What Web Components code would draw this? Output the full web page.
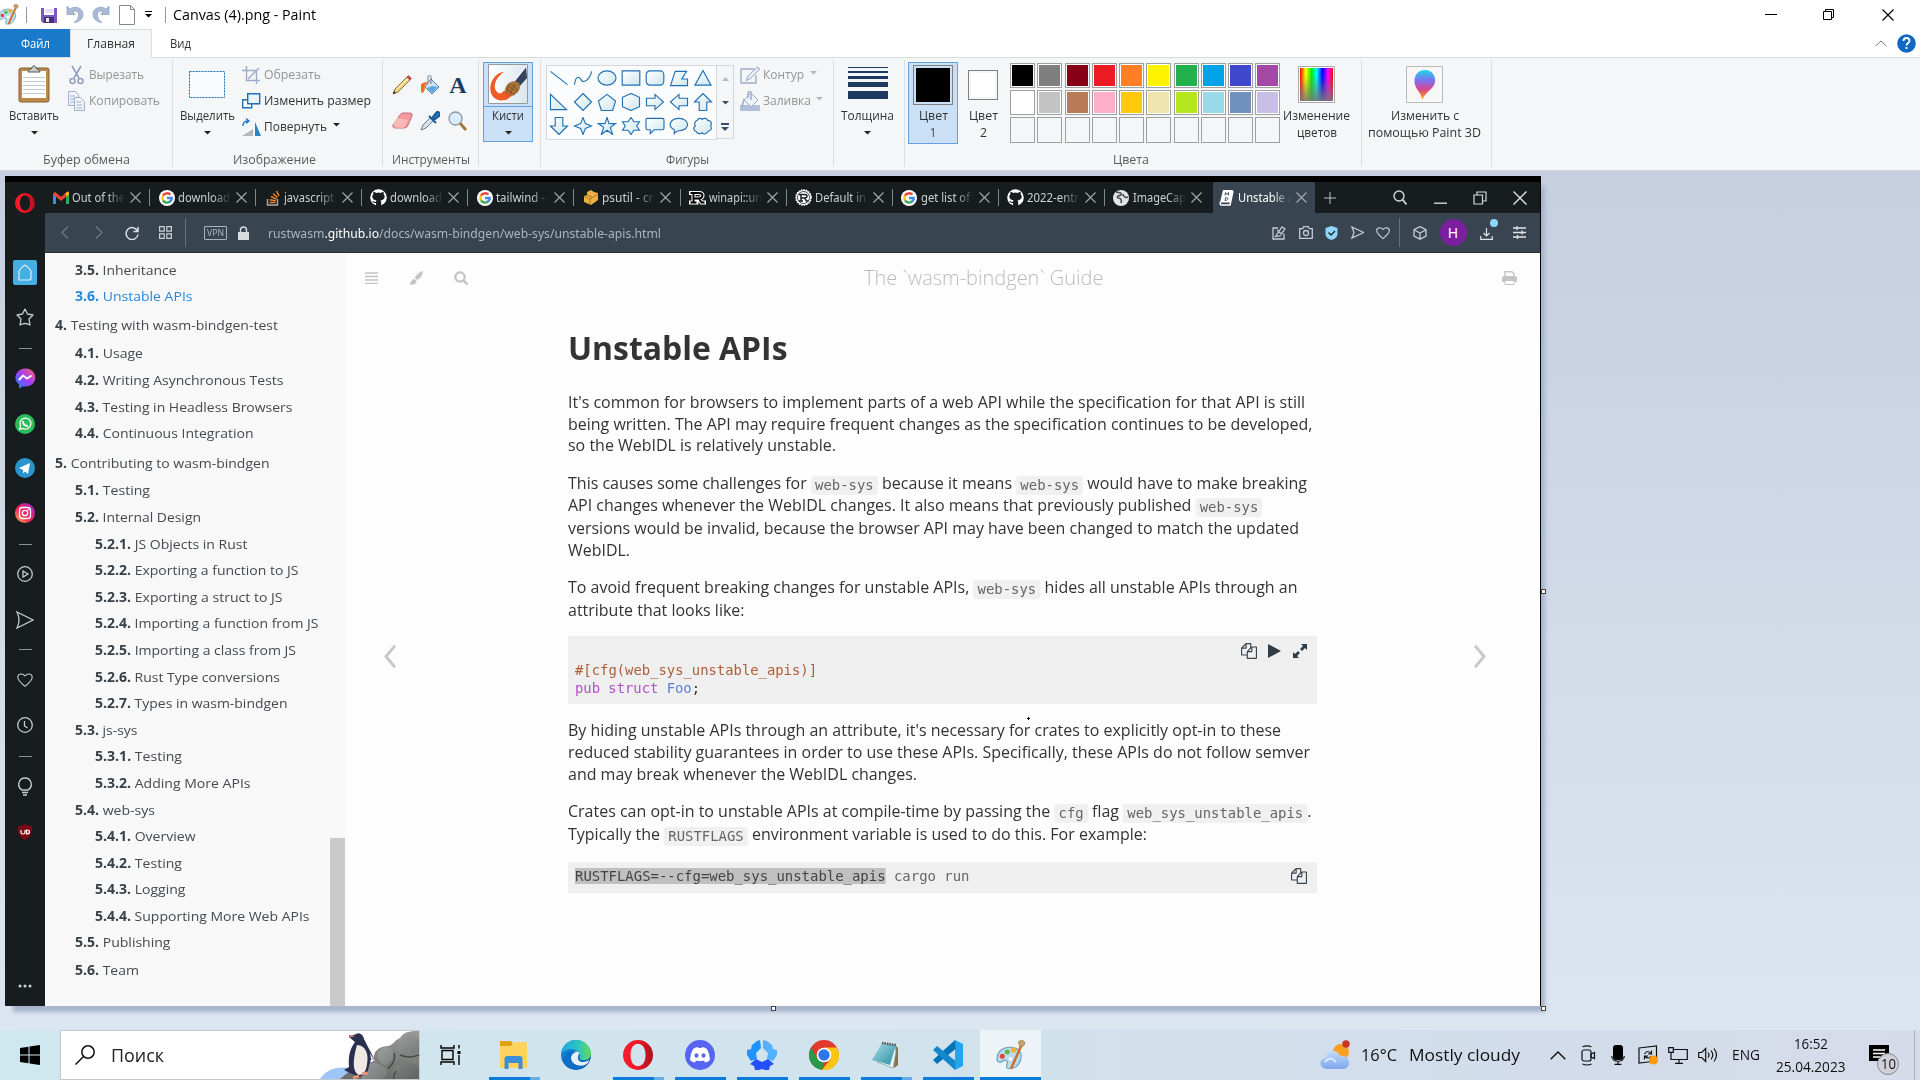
<!DOCTYPE html>
<html lang="ru"><head><meta charset="utf-8"><title>Canvas (4).png - Paint</title>
<style>html,body{margin:0;background:#fff;overflow:hidden}body{width:1924px;height:1080px}</style></head>
<body><paint-app></paint-app>
<script>
const S=(w,h,b,vb,x='')=>`<svg width="${w}" height="${h}" viewBox="${vb||`0 0 ${w} ${h}`}" fill="none" ${x}>${b}</svg>`;
const F=(w,t,s='',c='')=>`<fit-text w="${w}" class="${c}" style="${s}">${t}</fit-text>`;
// Stack items in a column: [top, height, html, extra style]
const V=(y,items)=>items.map(([t,h,b,st=''])=>{const o=`<div class="v" style="margin-top:${(t-y).toFixed(2)}px;height:${h}px;${st}">${b}</div>`;y=t+h;return o}).join('');
// Line items up in a row: [left, width, html, extra style]
const H=(x,items)=>items.map(([l,w,b,st=''])=>{const o=`<div class="h" style="margin-left:${(l-x).toFixed(2)}px;width:${w}px;${st}">${b}</div>`;x=l+w;return o}).join('');
const BASE=`*{box-sizing:border-box}svg{display:block;flex:none}.v,.h{flex:none;display:flex;align-items:center;justify-content:center}`;
const def=(name,css,html)=>customElements.define(name,class extends HTMLElement{constructor(){super();this.attachShadow({mode:'open'}).innerHTML=`<style>${BASE}${css}</style>${html}`}});

const palette=(n)=>S(n,n,`<path d="M3 9C8 4 18 5 20 11c1 7-4 12-9 12-3 0-3-2-2-4s-2-4-4-2-5 0-4-3c0-2 1-4 2-5z" fill="#b9dcee" stroke="#6b9dc0" stroke-width=".9"/><circle cx="5" cy="13" r="2" fill="#e0463a"/><circle cx="9" cy="9.500" r="2" fill="#5cb84a"/><circle cx="14" cy="8" r="2.200" fill="#f3b32c"/><circle cx="11.500" cy="15" r="1.500" fill="#fff"/><path d="M20 5 12 23" stroke="#cf6f21" stroke-width="2"/><path d="M18 1.500c2-2 5-1 5 1 0 2-2 3-4 3z" fill="#c9a26c" stroke="#9b7340" stroke-width=".6"/>`,'0 0 24 24');
const arr=(c='#222')=>S(7,4,`<path d="M0 0h7L3.500 3.500z" fill="${c}"/>`);

/* ---------- title bar ---------- */
def('paint-titlebar',`:host{display:flex;height:29px;align-items:center;background:#fff;font:13.6px "Open Sans",sans-serif;color:#000}`,
H(0,[[-2,21,palette(21)],[26,1,'<i style="width:1px;height:16px;background:#999"></i>'],
[41,16,S(16,16,`<path d="M0 1h16v15H2l-2-2z" fill="#7d57c1"/><path d="M3 1h10v7H3z" fill="#fff"/><path d="M4 3h8M4 5h8" stroke="#c7c2d8"/><path d="M3 10h10v6H3z" fill="#483078"/><path d="M5 11h3v4H5z" fill="#e8e4f2"/>`)],
[66,18,S(18,19,`<path d="M1 1v8.500h8.500L6.800 6.800C10 5 12.500 6.500 12.500 10c0 3.500-2 6-4.500 7.500 6-.5 9-4 9-8.500C17 3 9 0 4 4z" fill="#a9b9d6" stroke="#8ca0c2" stroke-width=".7"/>`)],
[92,18,S(18,19,`<path d="M17 1v8.500H8.500l2.700-2.700C8 5 5.500 6.500 5.500 10c0 3.500 2 6 4.500 7.500-6-.5-9-4-9-8.500C1 3 9 0 14 4z" fill="#a9b9d6" stroke="#8ca0c2" stroke-width=".7"/>`)],
[119,16,S(16,20,`<path d="M.5.500h11l4 4v15H.5z" fill="#fff" stroke="#888"/><path d="M11.500.500v4h4" stroke="#888"/>`)],
[145,7,S(7,7,`<path d="M0 .500h7" stroke="#000"/><path d="M0 3h7L3.500 6.500z" fill="#000"/>`)],
[165,1,'<i style="width:1px;height:16px;background:#999"></i>'],[173,143,F(143,'Canvas (4).png - Paint')],
[1765,12,S(12,12,`<path d="M0 5.500h12" stroke="#000"/>`)],[1822,13,S(13,13,`<path d="M1.500 3.500h8v8h-8zM3.500 3V1.500h8v8H10" stroke="#000"/>`)],
[1882,12,S(12,12,`<path d="m.5.500 11 11m0-11-11 11" stroke="#000" stroke-width="1.200"/>`)]]));

def('paint-tabs',`:host{display:flex;height:29px;background:#fff;border-bottom:1px solid #dadbdc;font:12.2px/29px "Open Sans",sans-serif;color:#333}
.file{width:70px;background:#1979ca;color:#fff}.on{width:82px;height:29px;margin-left:0;background:#f5f6f7;border:1px solid #dadbdc;border-bottom:0;line-height:27px}
div{display:flex;justify-content:center;height:28px}.view{width:56px}.end{flex:1;justify-content:flex-start;align-items:center}`,
`<div class="file">${F(29,'Файл')}</div><div class="on">${F(48,'Главная')}</div><div class="view">${F(21,'Вид')}</div><div class="end">${H(208,[[1875,12,S(12,7,'<path d="m.5 6 5.500-5 5.500 5" stroke="#777"/>')],[1897,19,S(19,19,'<circle cx="9.500" cy="9.500" r="9.300" fill="#1167c4"/><path d="M6.500 7c0-4 6-4 6 0 0 2-3 2-3 4.500M9.500 13v2" stroke="#fff" stroke-width="1.800"/>')]])}</div>`);

/* ---------- ribbon ---------- */
def('ribbon-group',`:host{display:flex;flex-direction:column;flex:none;height:107px;margin-top:2px;border-right:1px solid #dcdedf;width:var(--w)}
.body{height:92px;display:flex;align-items:flex-start}footer{height:15px;display:flex;justify-content:center;line-height:15px;color:#5a5a5a;padding-right:var(--sh,0px)}`,
`<div class="body"><slot></slot></div><footer><slot name="label"></slot></footer>`);
const grp=(w,lw,label,body,sh='0px')=>`<ribbon-group style="--w:${w}px;--sh:${sh}">${body}${label?`<span slot="label">${F(lw,label)}</span>`:''}</ribbon-group>`;
const col=(x,w,items,cls='')=>`<div class="col ${cls}" style="margin-left:${x}px;width:${w}px">${V(60,items)}</div>`;
const lrow=(x,w,items)=>`<div class="col" style="margin-left:${x}px;width:${w}px">${V(60,items.map(([t,b])=>[t,20,b,'justify-content:flex-start']))}</div>`;
const clip=S(32,38,`<rect x="1" y="3" width="30" height="34" rx="2" fill="#b98a4b" stroke="#85602f"/><path d="M4 6h24v27H4z" fill="#fff"/><path d="M5 12.500h22M5 16.500h22M5 20.500h22M5 24.500h22M5 28.500h22" stroke="#bdcbd8"/><path d="M10 7c0-3 3-2 4-4 1-3 3-3 4 0 1 2 4 1 4 4z" fill="#c9cbcd" stroke="#555"/>`);
const st='stroke="#1f6fb5" stroke-width="1.200"';
const shp=['<path d="M1 2l18 14" '+st+'/>','<path d="M1 16c1-8 4-10 7-5s10-2 11-9" '+st+'/>','<ellipse cx="10" cy="9" rx="9.500" ry="7.500"/>','<path d="M.7 1.500h18.600v15H.7z"/>','<rect x=".7" y="1.500" width="18.600" height="15" rx="4"/>','<path d="M6 2h12l-5 8h6v7H1z"/>','<path d="M10 1 18.500 16.500h-17z"/>',
'<path d="M1 1v16h17z"/>','<path d="m10 0 9 9-9 9-9-9z"/>','<path d="m10 1 9 7-3 10H4L1 8z"/>','<path d="m10 0 9 4v10l-9 4-9-4V4z"/>','<path d="M1 5h9V1l9 8-9 8v-4H1z"/>','<path d="M19 5h-9V1L1 9l9 8v-4h9z"/>','<path d="M6 18v-9H1l9-9 9 9h-5v9z"/>',
'<path d="M6 0v9H1l9 9 9-9h-5V0z"/>','<path d="m10 0 2.500 6.500L19 9l-6.500 2.500L10 18l-2.500-6.500L1 9l6.500-2.500z"/>','<path d="m10 0 2.200 6.500H19l-5.500 4L16 18l-6-4.500L4 18l2.500-7.500L1 6.500h6.800z"/>','<path d="m10 0 3 4.500h6L16 9l3 4.500h-6L10 18l-3-4.500H1L4 9 1 4.500h6z"/>','<path d="M2 1h16q1.500 0 1.500 2v8q0 2-1.500 2H9l-4 4v-4H2Q.5 13 .5 11V3Q.5 1 2 1z"/>','<path d="M10 1c12 0 12 13 0 13-2 0-3 0-5 3v-4C-3 9 1 1 10 1z"/>','<path d="M4 3c1-3 4-2 5-1 2-2 5-1 6 1 3 0 5 3 3 6 2 3 0 5-3 6-1 3-5 3-6 1-2 2-5 1-6-1-3-1-4-4-1-6-2-3 0-5 2-6z"/>'];
const cols=['#000','#7f7f7f','#880015','#ed1c24','#ff7f27','#fff200','#22b14c','#00a2e8','#3f48cc','#a349a4','#fff','#c3c3c3','#b97a57','#ffaec9','#ffc90e','#efe4b0','#b5e61d','#99d9ea','#7092be','#c8bfe7'];
const tools=[
S(20,20,'<path d="m1 19 2-5L15 2l3 3L6 17z" fill="#f3d27c" stroke="#6d5628" stroke-width=".8"/><path d="m15 2 1.500-1.500 3 3L18 5z" fill="#d84a56" stroke="#84434a" stroke-width=".7"/><path d="m5 14 11-10" stroke="#fff6d6"/><path d="m1 19 1-3 2 2z" fill="#333"/>'),
S(20,20,'<path d="m11 4 8 8-7 7-7-7z" fill="#cfe3f5" stroke="#5580ab"/><path d="m12 11 6 1-6 6-5-5z" fill="#5aa6e0"/><path d="M11 9V2c0-2-3-2-3 0v5" stroke="#6c7f92"/><path d="M1 17V10c0-2 4-3 8-3-3 2-5 3-4 7l-2 4z" fill="#f16a23"/>'),
'<b class="A">A</b>',
S(21,20,'<path d="M8 4q1-2 3-2h7q3 0 2 3l-4 9q-1 3-4 3H4q-4 0-3-3z" fill="#f29a9d" stroke="#c66e72"/><path d="m2 12 3-5 11 2-4 8-9-.5q-2-1-1-4.500z" fill="#f9b8b7"/>'),
S(20,20,'<path d="m1 19 2-5 8-8 3 3-8 8z" fill="#d6e3ec" stroke="#6a7d8e"/><path d="m9 5 7 7M12 7l4-5c2-3 5 1 3 3l-5 4z" stroke="#185b94" fill="#2379ba" stroke-width="2"/>'),
S(20,20,'<path d="m11 11 7 8" stroke="#a4793e" stroke-width="3"/><circle cx="7.500" cy="7.500" r="6.500" fill="#dcecfa" stroke="#8b97a4" stroke-width="1.300"/>')];
def('paint-ribbon',`:host{display:flex;height:113px;background:#f5f6f7;border-bottom:1px solid #d5d7da;font:12.2px/16px "Open Sans",sans-serif;color:#333}
.col{display:flex;flex-direction:column;flex:none}.g{color:#949494}
.sel{height:80px;margin-top:2px;background:#c9e0f7;border:1px solid #62a2e4}
.tools{display:grid;grid-template:36px 36px/28px 28px 28px;margin:7px 0 0 5px;place-items:center}
.A{font:bold 24px/24px "Liberation Serif",serif;color:#1e3c66}
.gal{display:grid;grid-template-columns:repeat(7,24px);grid-auto-rows:24px;place-items:center;width:171px;height:75px;margin:5px 0 0 5px;border:1px solid #d5d7db;background:#fbfcfd}
.scr{width:18px;height:74px;margin:5px 0 0 -1px;border:1px solid #d5d7db;display:grid;grid-template-rows:25px 24px 24px;place-items:center}
.pal{display:grid;grid-template:25px 25px 26px/repeat(10,25px);gap:2px 2.250px;margin:3px 0 0 12px}.pal i{border:1px solid #a0a0a0;padding:1px;background:content-box var(--c,transparent);box-shadow:inset 0 0 0 1px var(--in,transparent)}
.sw{border:1px solid #808080;background:content-box var(--c) ;padding:2px}`,
grp(173,87,'Буфер обмена',col(9,50,[[65,38,clip],[108,16,F(50,'Вставить')],[131,4,arr()]])+
`<div class="col g" style="margin-left:9px">${V(60,[[65,20,S(17,20,'<path d="M4 1 11 13M13 1 6 13" stroke="#8fa0bd" stroke-width="1.600"/><circle cx="4.500" cy="16" r="2.500" stroke="#8fa0bd" stroke-width="1.500"/><circle cx="12.500" cy="16" r="2.500" stroke="#8fa0bd" stroke-width="1.500"/>')+'<span style="width:4px"></span>'+F(55,'Вырезать'),'justify-content:flex-start'],[91,20,S(17,20,'<g stroke="#a3b2cc" fill="#eff3f9"><path d="M.5.500h7l3 3v11H.500z"/><path d="M6.500 6.500h6l4 4v9h-10z"/><path d="M2 5h5M2 8h5M2 11h4M8.500 11h5M8.500 14h6M8.500 17h6"/></g>')+'<span style="width:4px"></span>'+F(71,'Копировать'),'justify-content:flex-start']])}</div>`,'0px')+
grp(210,83,'Изображение',col(6,56,[[70,28,S(36,27,'<rect x=".5" y=".5" width="35" height="26" fill="#f8fbfe" stroke="#1f6fb5" stroke-dasharray="2 1"/>')],[108,16,F(55,'Выделить')],[131,4,arr()]])+
lrow(7,135,[[65,S(19,19,'<path d="M0 4.500h14.500V18M4.500 0v14.500H18M6 13 17 2" stroke="#9badc9" stroke-width="1.400"/>')+'<span style="width:3px"></span><span class="g">'+F(57,'Обрезать')+'</span>'],[91,S(19,18,'<path d="M.7 7.700h9v8h-9z" fill="#fff" stroke="#1f6fb5" stroke-width="1.400"/><path d="M5.700 1.700h12v10h-12z" fill="#e8f4fb" stroke="#1f6fb5" stroke-width="1.400"/>')+'<span style="width:3px"></span>'+F(107,'Изменить размер')],[117,S(19,19,'<path d="M0 18 11 11v7z" fill="#b8b8b8"/><path d="m13 4 6 14h-6z" fill="#2a83c4"/><path d="M1 8c0-4 2-5 5-5M4 .500 7 3 4 5.500" stroke="#1f78c8" stroke-width="1.400"/>')+'<span style="width:3px"></span>'+F(63,'Повернуть')+'<span style="margin:-4px 0 0 6px">'+arr()+'</span>']]),'6px')+
grp(96,78,'Инструменты',`<div class="tools">${tools.join('')}</div>`)+
grp(62,0,'',`<div class="col sel" style="margin-left:4px;width:50px">${V(63,[[64,40,S(40,40,'<defs><linearGradient id="b" x2="1"><stop stop-color="#fff"/><stop offset="1" stop-color="#d9e8ee"/></linearGradient></defs><path d="M.5.500h39v39H.5z" fill="url(#b)" stroke="#999"/><path d="M16 8C3 9-3 29 8 35c5 3 11 1 14-3l-6-5c-3 3-5 3-7 1C4 23 8 13 16 8z" fill="#ef5b25"/><path d="M26 18 38 3l1 11-8 9z" fill="#34425f"/><path d="m26 17 12-15" stroke="#eef" stroke-width="2"/><path d="M17 25c2-7 9-10 14-6 3 5-1 12-10 14z" fill="#a9733a"/><path d="M9 34c4-1 5-6 8-8l6 6c-4 5-9 5-14 2z" fill="#f05a28"/><path d="m20 22 9 6m-6-8 7 6m-12-1 9 6m-6-11-3 11m9-11-6 12" stroke="#75481f" stroke-width=".7"/>')],[106,1,'','background:#62a2e4'],[108,16,F(32,'Кисти')],[131,4,arr()]])}</div>`)+
grp(293,43,'Фигуры',`<div class="gal">${shp.map((p,i)=>S(20,18,i<2?p:`<defs><linearGradient id="q${i}" x2="1" y2="1"><stop stop-color="#fff"/><stop offset="1" stop-color="#cde6ee"/></linearGradient></defs><g fill="url(#q${i})" ${st}>${p}</g>`,'-.5 -.5 21 19')).join('')}</div><div class="scr">${S(7,4,'<path d="M0 4h7L3.500 0z" fill="#b4bccb"/>')}${arr('#34506f')}${S(8,8,'<path d="M0 1h8" stroke="#34506f" stroke-width="2"/><path d="M0 4h8L4 8z" fill="#34506f"/>')}</div>`+
`<div class="col g" style="margin-left:6px">${V(60,[[65,20,S(20,18,'<path d="M16 9v8H1V3h13" stroke="#9badc9" stroke-width="1.400"/><path d="m6 15 2-5L17 1l3 2-9 9z" fill="#e4eaf3" stroke="#9badc9"/>')+'<span style="width:3px"></span>'+F(41,'Контур')+'<span style="margin:-4px 0 0 6px">'+arr('#b3b9c1')+'</span>','justify-content:flex-start'],[91,20,S(20,20,'<path d="M0 14h20v6H0z" fill="#b2c0d8"/><path d="m11 2 7 7-7 7-7-7z" fill="#edf2fa" stroke="#9badc9"/><path d="M11 9V2c0-3-3-2-3 1v4M4 8l-2 8" stroke="#9badc9" stroke-width="1.500"/>')+'<span style="width:3px"></span>'+F(48,'Заливка')+'<span style="margin:-4px 0 0 5px">'+arr('#b3b9c1')+'</span>','justify-content:flex-start']])}</div>`,'0px')+
grp(71,0,'',col(7,53,[[67,32,S(40,32,'<path d="M0 0h40v1H0zM0 4h40v2H0zM0 9h40v3H0zM0 15h40v5H0zM0 24h40v8H0z" fill="#1f3a61"/>')],[108,16,F(53,'Толщина')],[131,4,arr()]]))+
grp(457,36,'Цвета',`<div class="col sel" style="margin-left:3px;width:50px;height:82px">${V(63,[[65,40,'<span class="sw" style="width:40px;height:40px;--c:#000"></span>'],[108,16,F(29,'Цвет')],[125,16,F(6,'1')]])}</div>`+col(10,30,[[70,30,'<span class="sw" style="width:30px;height:30px;--c:#fff"></span>'],[108,16,F(29,'Цвет')],[125,16,F(7,'2')]])+
`<div class="pal">${[...cols,...Array(10).fill('')].map(c=>`<i style="${c?`--c:${c};--in:#fff`:''}"></i>`).join('')}</div>`+col(3,67,[[66,38,S(38,38,`<defs><linearGradient id="r" x2="1"><stop stop-color="red"/><stop offset=".17" stop-color="#ff0"/><stop offset=".35" stop-color="#0e0"/><stop offset=".5" stop-color="#0ff"/><stop offset=".68" stop-color="#00f"/><stop offset=".85" stop-color="#f0f"/><stop offset="1" stop-color="red"/></linearGradient><linearGradient id="k" y2="1" x2="0"><stop offset=".2" stop-color="#777" stop-opacity="0"/><stop offset="1" stop-color="#777" stop-opacity=".9"/></linearGradient></defs><path d="M.5.500h36v36H.5z" fill="#fff" stroke="#aaa"/><path d="M2 2h33v33H2z" fill="url(#r)"/><path d="M2 2h33v33H2z" fill="url(#k)"/>`)],[108,16,F(67,'Изменение')],[125,16,F(40,'цветов')]]),'4px')+
grp(130,0,'',col(6,113,[[66,38,S(38,38,`<defs><linearGradient id="p" y2="1" x2="0"><stop stop-color="#1bd8ef"/><stop offset=".35" stop-color="#7e70f0"/><stop offset=".65" stop-color="#d9458c"/><stop offset="1" stop-color="#ffb400"/></linearGradient></defs><path d="M.5.500h36v36H.5z" fill="#f7f7f7" stroke="#bbb"/><path d="M19 4c7 0 11 6 10 12-1 7-9 9-13 18 0-6-5-9-7-15C7 11 11 4 19 4z" fill="url(#p)"/>`)],[108,16,F(68,'Изменить с')],[125,16,F(113,'помощью Paint 3D')]])));

/* ---------- browser window pictured on the canvas ---------- */
const W='stroke="#c4cbd0" stroke-width="1.300"';
const heart=(s,k=W)=>S(s,s,`<path d="M10 18C4 13 1 10 1 6.500 1 2 7 1 10 5c3-4 9-3 9 1.500 0 3.500-3 6.500-9 11.500z" ${k}/>`,'0 0 20 20');
const operaO=(s,id)=>S(s,s,`<defs><linearGradient id="${id}" x2="1"><stop stop-color="#ff1b2d"/><stop offset=".5" stop-color="#f01525"/><stop offset="1" stop-color="#b0101c"/></linearGradient></defs><path fill-rule="evenodd" fill="url(#${id})" d="M12 0a12 12 0 1 0 0 24 12 12 0 0 0 0-24zm0 3c4 0 6 4 6 9s-2 9-6 9-6-4-6-9 2-9 6-9z"/>`,'0 0 24 24');
const dash=S(13,1,'<path d="M0 .500h13" stroke="#8b9094"/>');
def('opera-rail',`:host{display:flex;flex-direction:column;width:40px;flex:none;background:#171c1f}`,
V(182,[[192.500,20,operaO(20,'o')],[260,25,S(24,25,'<rect width="24" height="25" rx="2" fill="#45aee2"/><path d="M6 20V11c2-3 4-5 6-6 2 1 4 3 6 6v7q0 2-2 2z" stroke="#dff2fb" stroke-width="1.200"/>')],[307,20,S(18,18,`<path d="m9 1 2.500 5 5.500 1-4 4 1 6q-2.500-1.500-5-1.500T4 17l1-6-4-4 5.500-1z" ${W} stroke-linejoin="round"/>`)],[348,1,dash],
[368,20,S(21,21,'<defs><linearGradient id="m" y1="1" x2="1" y2="0"><stop stop-color="#088fff"/><stop offset=".5" stop-color="#a43cf6"/><stop offset="1" stop-color="#ff6069"/></linearGradient></defs><path d="M10.500.500c13 0 13 18 0 18l-3 0L4 20.500v-4C-3 11 1 .500 10.500.500z" fill="url(#m)"/><path d="m4 12 4-4.500 4 3 4.500-3" stroke="#fff" stroke-width="2"/>')],
[413.500,20,S(20,20,'<circle cx="10" cy="10" r="10" fill="#2bbd5b"/><path d="m4.500 15.500 1-3.500a5.500 5.500 0 1 1 2.500 2.500z" stroke="#fff" stroke-width="1.200"/><path d="M8 7c0 4 2 5 5 5" stroke="#fff" stroke-width="1.800"/>')],
[458,20,S(20,20,'<circle cx="10" cy="10" r="10" fill="#2795cc"/><path d="m4 10 11-5-2 11-3-2.500-2 2V12z" fill="#fff"/>')],
[503,20,S(20,20,'<defs><linearGradient id="i" y1="1" x2="1" y2="0"><stop stop-color="#ffc04a"/><stop offset=".4" stop-color="#f52c52"/><stop offset="1" stop-color="#9b22d5"/></linearGradient></defs><circle cx="10" cy="10" r="10" fill="url(#i)"/><rect x="4.500" y="4.500" width="11" height="11" rx="3" stroke="#fff" stroke-width="1.300"/><circle cx="10" cy="10" r="2.700" stroke="#fff" stroke-width="1.300"/><circle cx="13.300" cy="6.700" r=".8" fill="#fff"/>')],
[544,1,dash],[566,16,S(16,16,`<circle cx="8" cy="8" r="7.300" ${W}/><path d="m6 5 5 3-5 3z" ${W}/>`)],[610.500,18,S(18,18,`<path d="m1 1 16 8L1 17q4-8 0-16z" ${W}/>`)],[649,1,dash],[672,16,heart(16)],[717,16,S(16,16,`<circle cx="8" cy="8" r="7.300" ${W}/><path d="M7.500 4v5l3 2" ${W}/>`)],[756,1,dash],
[777,19,S(14,19,`<path d="M4 13C-2 9 1 1 7 1s9 8 3 12z" ${W}/><path d="M4 15.500h6M5 18h4" ${W}/>`)],[824,16,S(16,16,'<path d="M8 0c3 2 5 2 7 2 0 7-1 11-7 14C2 13 1 9 1 2c2 0 4 0 7-2z" fill="#800711"/><path d="M4 6v2.500q0 1.500 2 1.500t2-1.500V6M9.500 6v4q3 0 3-2t-3-2z" stroke="#fff" stroke-width="1.200"/>')],
[983,5,S(14,4,'<g fill="#d0d4d6"><circle cx="2" cy="2" r="1.500"/><circle cx="7" cy="2" r="1.500"/><circle cx="12" cy="2" r="1.500"/></g>')]]));

const goog=S(16,16,'<circle cx="8" cy="8" r="8" fill="#fff"/><g stroke-width="2.300"><path d="M11.500 4.500A5 5 0 0 0 4 5.500" stroke="#ea4335"/><path d="M4 5.500a5 5 0 0 0 0 5" stroke="#fbbc05"/><path d="M4 10.500a5 5 0 0 0 7.500.700" stroke="#34a853"/><path d="M11.200 11.500q1.800-1.500 1.600-3.500H8" stroke="#4285f4"/></g>');
const git=S(17,17,'<circle cx="8.500" cy="8.500" r="8.300" fill="#fff"/><path d="M6 17v-3c-3 .5-3-1.500-4-2 2-.5 2 1.500 4 .800 0-.8.4-1 .6-1.300-5-.8-5-5-3.200-6.300-.3-1 0-2 .2-2.500 1 0 2 .8 2.500 1.200q2.400-.7 4.800 0C11.500 3.500 12.500 2.700 13.400 2.700c.3.700.5 1.500.2 2.500 2 2 1.500 5.500-3.200 6.300.5.500.8 1 .8 2V17z" fill="#171c1f"/>');
const rp='M1.500 3h8.500q3.500 0 3.500 2.500T10 8.500l2.500 4h3M4.500 3v9.500M1.500 12.500h6M5 8.500h5';
const fav={gm:S(16,16,'<path d="M1.500 14V3.500" stroke="#4285f4" stroke-width="3"/><path d="M14.500 14V3.500" stroke="#34a853" stroke-width="3"/><path d="m1 3 7 6 7-6" stroke="#ea4335" stroke-width="3"/><path d="m13 5 3-2.500" stroke="#fbbc04" stroke-width="3"/>'),
so:S(14,16,'<path d="M1.500 9v6h10V9" stroke="#aaa" stroke-width="1.400"/><path d="M3.500 12.500h6M3.700 9.700l6 1M5 6.500l5.500 2.700M7 3.500l4.500 4M10.500 1l2.500 5" stroke="#f48024" stroke-width="1.500"/>'),
py:S(16,17,'<path d="m4 3 4-2 3 2 4 1v7l-7 5-7-3V7l3-1z" fill="#eab042"/><path d="m1 7 6 3v6M7 10l8-5M4 6l5 2" stroke="#98691c" stroke-width=".7"/>'),
r1:S(17,16,`<path d="${rp}" stroke="#fff" stroke-width="4" stroke-linecap="square"/><path d="${rp}" stroke="#000" stroke-width="1.900"/>`),
r2:S(17,17,'<circle cx="8.500" cy="8.500" r="7.500" fill="#fff" stroke="#fff" stroke-width="1.600" stroke-dasharray="1.500 1"/><circle cx="8.500" cy="8.500" r="6" stroke="#171c1f" stroke-width=".8"/><path d="M4 5.500h5.500q2.500 0 2.500 1.700T9.500 9l2 3h2M6 5.500V12M4 12h4M6 9h4" stroke="#171c1f" stroke-width="1.500"/>'),
gl:S(16,16,'<circle cx="8" cy="8" r="8" fill="#e3e5e7"/><path d="M3 2c3 1 6 0 5 3-2 1-5 1-3 3 3 0 4 2 3 5M10 4c0 3 3 4 5 3" stroke="#4b5357" stroke-width="1.700"/>'),
mb:S(15,16,'<path d="M4 0h10l-2.500 12.500H1z" fill="#fff"/><path d="M1.500 12q-1 3 1 3h8.500L14 1" stroke="#fff" stroke-width="1.500"/><path d="m6 5.500.5-3 1.500 2 1.500-2v3M6 10.500l.7-3c3.500 0 2.500 3-.7 3z" stroke="#38444f" stroke-width=".9"/>')};
const tabs=[['gm','Out of the'],['go','download'],['so','javascript'],['gi','download'],['go','tailwind -'],['py','psutil - cra'],['r1','winapi::un'],['r2','Default in'],['go','get list of'],['gi','2022-entr'],['gl','ImageCap'],['mb','Unstable A']];
const tw=[53,52,50,52,49,58,53,51,49,52,53,57];
def('opera-tabs',`:host{display:flex;height:31px;background:#171c1f;font:12.8px/31px "Noto Sans",sans-serif;color:#ccd0d2}
.t{width:106.100px;flex:none;display:flex;align-items:center;padding-left:7px;position:relative;border-right:1px solid transparent}
.t::after{content:"";position:absolute;right:0;width:1px;height:17px;background:#7d878e}.on::after,.t:nth-of-type(11)::after{display:none}
.t .ic{width:17px;display:flex;justify-content:center}.tx{width:53px;margin-left:3px;overflow:hidden;-webkit-mask:linear-gradient(90deg,#000 66%,transparent)}.x{margin-left:5px}
.on{background:#384550;color:#fff;width:102px;padding-left:5px;margin-left:1px}`,
tabs.map(([f,t],i)=>`<div class="t ${i==11?'on':''}"><span class="ic">${f=='go'?goog:f=='gi'?git:fav[f]}</span><span class="tx">${F(tw[i],t)}</span><span class="x">${S(11,11,'<path d="m.5.500 10 10m0-10-10 10" stroke="#a4abae" stroke-width="1.100"/>')}</span></div>`).join('')+
H(1315.100,[[1324,12,S(12,12,'<path d="M6 0v12M0 6h12" stroke="#bcc1c4"/>')],[1392,16,S(16,16,'<circle cx="7" cy="6" r="5" stroke="#d4d7d9" stroke-width="1.400"/><path d="m10.500 9.500 4 5" stroke="#d4d7d9" stroke-width="1.800"/>')],[1434,13,S(13,13,'<path d="M0 12.200h13" stroke="#d4d7d9" stroke-width="1.400"/>')],[1473,14,S(14,14,'<path d="M1 4h8.500v9H1zM4 4V1h9v9H9.500" stroke="#d4d7d9" stroke-width="1.200"/>')],[1513,14,S(14,14,'<path d="m.5.500 13 13m0-13-13 13" stroke="#e4e6e8" stroke-width="1.300"/>')]]));

def('opera-address',`:host{display:flex;align-items:center;height:40px;background:#384550;border-bottom:1px solid #2b3033;font:12.8px/20px "Noto Sans",sans-serif;color:#aab4bb}
b{font-weight:400;color:#fff}.sep{width:1px;height:29px;background:#65707a}.vpn{width:23px;height:14px;border:1px solid #aab4bb;border-radius:1px;font-size:9px;line-height:12px;display:flex;justify-content:center}
.av{width:27px;height:27px;border-radius:50%;background:#7b1f9e;color:#fff;font:14px/27px "Noto Sans",sans-serif;text-align:center}.dl{position:relative}.dl i{position:absolute;left:10px;top:-7px;width:8px;height:8px;border-radius:50%;background:#8fd5fb}`,
H(45,[[61,8,S(8,13,'<path d="M7 .500 1 6.500l6 6" stroke="#6e7a84" stroke-width="1.200"/>')],[95,8,S(8,13,'<path d="m1 .500 6 6-6 6" stroke="#6e7a84" stroke-width="1.200"/>')],[125,14,S(14,14,'<path d="M12.500 5A6 6 0 1 0 13 8.500M13 1v4.500H8.500" stroke="#dde1e3" stroke-width="1.500"/>')],[159,13,S(13,13,'<path d="M.6.600h4.600v4.600H.600zM7.800.600h4.600v4.600H7.800zM.6 7.800h4.600v4.600H.600zM7.800 7.800h4.600v4.600H7.800z" stroke="#ccd2d6" stroke-width="1.200"/>')],[185,1,'<i class="sep"></i>'],[204,23,'<span class="vpn">'+F(17,'VPN')+'</span>'],[238,11,S(11,14,'<path d="M0 6h11v8H0z" fill="#d8dcdf"/><path d="M2.500 6V4c0-4 6-4 6 0v2" stroke="#d8dcdf" stroke-width="1.400"/>')],[268,393,F(393,'rustwasm<b>.github.io</b>/docs/wasm-bindgen/web-sys/unstable-apis.html')],
[1272,14,S(14,14,`<path d="M6 2H1v11h11V7.500M3.500 10.500 10 1l3 2-5 7zM5 4l5 4.500" ${W}/>`)],[1299,14,S(14,13,`<path d="M.7 2.700h3l1-2h4.600l1 2h3v9.600H.7z" ${W}/><circle cx="7" cy="7" r="2.500" ${W}/>`)],[1325,13,S(13,14,'<path d="M6.500 0 12.500 2v6q0 4-6 6-6-2-6-6V2z" fill="#8ed6fa"/><path d="m3.500 6.500 2.500 2.500 4-4" stroke="#22303a" stroke-width="1.500"/>')],[1351,13,S(13,13,`<path d="m1 1 11.500 5.500L1 12l2-5.500z" ${W}/>`)],[1376,14,heart(14,'stroke="#c4cbd0" stroke-width="1.700"')],[1399,1,'<i class="sep"></i>'],[1413,14,S(14,14,`<path d="m7 .700 6 3v6.500l-6 3-6-3V3.700zM1 3.700l6 3.300 6-3.300M7 7v6" ${W}/>`)],[1439.500,27,'<div class="av">H</div>'],[1480,13,'<div class="dl">'+S(13,14,'<path d="M6.500 2v8M3.500 7l3 3 3-3M.700 10v3.300h11.600V10" stroke="#dde1e3" stroke-width="1.200"/>')+'<i></i></div>'],[1513,13,S(13,13,'<path d="M0 2h13M0 6.500h13M0 11h13M4 0v4M9 4.500v4M4.500 9v4" stroke="#e2e5e7" stroke-width="1.300"/>')]]));

const toc=[[275,1,'3.5.','Inheritance',101.500],[301.400,1,'3.6.','Unstable APIs',117.500],[330,0,'4.','Testing with wasm-bindgen-test',223],[358.500,1,'4.1.','Usage',68],[385.500,1,'4.2.','Writing Asynchronous Tests',208.500],[412,1,'4.3.','Testing in Headless Browsers',217.500],[438,1,'4.4.','Continuous Integration',178.500],[467.700,0,'5.','Contributing to wasm-bindgen',214.500],[495.500,1,'5.1.','Testing',75],[522,1,'5.2.','Internal Design',126],[549,2,'5.2.1.','JS Objects in Rust',152.500],[575.500,2,'5.2.2.','Exporting a function to JS',203.500],[602,2,'5.2.3.','Exporting a struct to JS',187.500],[628.500,2,'5.2.4.','Importing a function from JS',223.500],[655.500,2,'5.2.5.','Importing a class from JS',201],[682,2,'5.2.6.','Rust Type conversions',185],[708.500,2,'5.2.7.','Types in wasm-bindgen',192.500],[735,1,'5.3.','js-sys',62.500],[761.500,2,'5.3.1.','Testing',87],[788.500,2,'5.3.2.','Adding More APIs',155.500],[814.700,1,'5.4.','web-sys',80],[841.500,2,'5.4.1.','Overview',100.500],[868,2,'5.4.2.','Testing',87],[894.500,2,'5.4.3.','Logging',90.500],[921,2,'5.4.4.','Supporting More Web APIs',214.500],[947.500,1,'5.5.','Publishing',95.500],[974.700,1,'5.6.','Team',64]];
def('doc-toc',`:host{display:flex;width:300px;flex:none;background:#f8f8f8;color:#434a50;font:13.500px/20px "Open Sans",sans-serif}
nav{width:285px;display:flex;flex-direction:column}.v{justify-content:flex-start}.bar{width:15px;height:168px;align-self:flex-end;background:#c9c9c9}.cur{color:#2389e0}b{color:#364048;font-weight:700}.cur b{color:#2389e0}`,
`<nav>${V(253,toc.map(([y,l,n,t,w],i)=>[y-15,20,F(w,`<b>${n}</b> ${t}`,'',i==1?'cur':''),`padding-left:${10+l*20}px`]))}</nav><div class="bar"></div>`);

const copy=S(16,16,'<path fill="#38444f" d="M1696 384q40 0 68 28t28 68v1216q0 40-28 68t-68 28h-960q-40 0-68-28t-28-68v-288h-544q-40 0-68-28t-28-68v-672q0-40 20-88t48-76l408-408q28-28 76-48t88-20h416q40 0 68 28t28 68v328q68-40 128-40h416zm-544 213l-299 299h299v-299zm-640-384l-299 299h299v-299zm196 647l316-316v-416h-384v416q0 40-28 68t-68 28h-416v640h512v-256q0-40 20-88t48-76zm956 804v-1152h-384v416q0 40-28 68t-68 28h-416v640h896z"/>','0 0 1792 1792');
def('code-block',`:host{display:flex;background:#efefef;width:749px;font:14px/17.600px "DejaVu Sans Mono","Liberation Mono",monospace;color:#333}
.c{flex:1;padding:var(--p) 0 0 7px;white-space:pre;display:flex;flex-direction:column;align-items:flex-start}.b{display:flex;gap:11px;padding:var(--q) 10px 0 0;align-items:center;height:max-content}`,`<div class="c"><slot></slot></div><div class="b"><slot name="tools"></slot></div>`);
const P=(lh,...ls)=>ls.map(([w,t])=>`<div class="ln" style="height:${lh}px">${F(w,t)}</div>`).join('');
const cd=t=>`<code>${t}</code>`;
def('doc-page',`:host{display:flex;flex:1;flex-direction:column;background:#fdfdfd;font:15.400px/22px "Open Sans",sans-serif;color:#333}
.top{height:49px;display:flex;align-items:center}.title{font:300 20px/28px "Open Sans",sans-serif;color:#bcbcbc}
.mid{flex:1;display:flex}.art{margin-left:0;width:749px;display:flex;flex-direction:column}.v{justify-content:flex-start;align-items:flex-start;flex-direction:column}.ln{display:flex;align-items:flex-start}
code{font:13.400px/16px "DejaVu Sans Mono","Liberation Mono",monospace;background:#f0f0f0;border-radius:3px;padding:2px 4px;color:#666;vertical-align:-1px}
h1{margin:0;font:700 31.500px/42px "Open Sans",sans-serif;color:#333}`,
`<div class="top">${H(345,[[365,13,S(13,12,'<path d="M0 1h13M0 4.500h13M0 8h13M0 11.500h13" stroke="#c4c4c4" stroke-width="1.600"/>')],[408.500,14,S(14,14,'<path d="M14 0c-4 1-8 5-8 7l2 2c3-1 6-5 6-9zM5.500 8c-4 0-2 3-5.500 5 4 2 8 0 7.500-3z" fill="#c4c4c4"/>')],[454,14,S(14,14,'<circle cx="6" cy="6" r="4.700" stroke="#c4c4c4" stroke-width="2.200"/><path d="m9.500 9.500 4 4" stroke="#c4c4c4" stroke-width="2.500"/>')],[863.800,240,F(239.500,'The `wasm-bindgen` Guide','','title')],[1502,15,S(15,14,'<path d="M3 6V.700h7l2 2V6" stroke="#c4c4c4" stroke-width="1.400"/><path d="M0 7q0-2 2-2h11q2 0 2 2v4H0z" fill="#c4c4c4"/><path d="M3 9.500h9v4H3z" fill="#fff" stroke="#c4c4c4"/>')]])}</div>
<div class="mid">${H(345,[[384,12,S(12,23,'<path d="M11 .700 2 11.500l9 10.800" stroke="#c8c8c8" stroke-width="3"/>'),'align-items:flex-start;padding-top:343px'],[568,749,`<div class="art">${V(302,[
[327,42,`<h1>${F(219.500,'Unstable APIs')}</h1>`],
[392,65,P(21.700,[737,"It's common for browsers to implement parts of a web API while the specification for that API is still"],[744.500,'being written. The API may require frequent changes as the specification continues to be developed,'],[268,'so the WebIDL is relatively unstable.'])],
[473,90,P(22.300,[739,`This causes some challenges for ${cd('web-sys')} because it means ${cd('web-sys')} would have to make breaking`],[694.500,`API changes whenever the WebIDL changes. It also means that previously published ${cd('web-sys')}`],[731,'versions would be invalid, because the browser API may have been changed to match the updated'],[62,'WebIDL.'])],
[577.300,45,P(22.300,[729.500,`To avoid frequent breaking changes for unstable APIs, ${cd('web-sys')} hides all unstable APIs through an`],[176.500,'attribute that looks like:'])],
[636,68,`<code-block style="--p:26px;--q:7px;height:68px">${F(242,'<span style="color:#ad5f37">#[cfg(web_sys_unstable_apis)]</span>')}${F(125,'<span style="color:#b34fc8">pub</span> <span style="color:#b34fc8">struct</span> <span style="color:#5c7cd6">Foo</span>;')}<span slot="tools">${copy}</span><span slot="tools">${S(13,14,'<path d="M0 0v14L13 7z" fill="#2f3c46"/>')}</span><span slot="tools" style="margin-left:1px">${S(14,14,'<path d="M8 0h6v6L12 4 9 7 7 5l3-3zM0 8v6h6l-2-2 3-3-2-2-3 3z" fill="#2f3c46"/>')}</span></code-block>`],
[720.500,66,P(21.800,[713,"By hiding unstable APIs through an attribute, it's necessary for crates to explicitly opt-in to these"],[742,'reduced stability guarantees in order to use these APIs. Specifically, these APIs do not follow semver'],[349,'and may break whenever the WebIDL changes.'])],
[801.300,45,P(22.300,[743.500,`Crates can opt-in to unstable APIs at compile-time by passing the ${cd('cfg')} flag ${cd('web_sys_unstable_apis')}.`],[579,`Typically the ${cd('RUSTFLAGS')} environment variable is used to do this. For example:`])],
[862,31,`<code-block style="--p:6.500px;--q:6px;height:31px">${F(394.500,'<span style="background:#c0c0c0;color:#444">RUSTFLAGS=--cfg=web_sys_unstable_apis</span> <span style="color:#666">cargo run</span>')}<span slot="tools">${copy}</span></code-block>`]])}</div>`,'align-items:flex-start'],[1473.500,12,S(12,23,'<path d="m1 .700 9 10.800-9 10.800" stroke="#c8c8c8" stroke-width="3"/>'),'align-items:flex-start;padding-top:343px']])}</div>`);

def('opera-window',`:host{display:flex;flex-direction:column;box-sizing:border-box;width:1536px;height:830px;background:#000;padding-top:6px;border-right:1px solid #000}.row{display:flex;flex:1;min-height:0}.main{flex:1;display:flex;flex-direction:column;min-width:0}.doc{flex:1;display:flex;min-height:0}`,
`<div class="row"><opera-rail></opera-rail><div class="main"><opera-tabs></opera-tabs><opera-address></opera-address><div class="doc"><doc-toc></doc-toc><doc-page></doc-page></div></div></div>`);
def('paint-workspace',`:host{display:block;box-sizing:border-box;height:859px;background:linear-gradient(#c5cfdf,#dce6f1);padding:5px 0 0 5px;position:relative}
opera-window{box-shadow:6px 8px 4px -2px #a6b5cb}i{position:absolute;width:5px;height:5px;border:1px solid #444;background:#fff}`,
`<opera-window></opera-window><i style="left:771px;top:835px"></i><i style="left:1541px;top:835px"></i><i style="left:1541px;top:418px"></i><i style="left:1027px;top:546px;width:3px;height:3px;border:0;background:#000;clip-path:polygon(33% 0,66% 0,66% 33%,100% 33%,100% 66%,66% 66%,66% 100%,33% 100%,33% 66%,0 66%,0 33%,33% 33%)"></i>`);

/* ---------- taskbar ---------- */
const app=(x,ic,u)=>[x-31,61,`<div class="app ${u==3?'act':''}">${ic}${u?`<div class="u u${u}"></div>`:''}</div>`];
const K='stroke="#111" stroke-width="1.200"';
const apps={ex:S(28,28,'<path d="M0 0h11l2 3-2 3H0z" fill="#e0a30d"/><path d="M0 5h11l3-4h13v26H0z" fill="#ffd35e"/><path d="M4.500 28V18q0-3 3-3h12q3 0 3 3v10h-4v-6h-10v6z" fill="#3b8fd4"/>'),
ed:S(30,30,'<defs><linearGradient id="e" x2="1"><stop stop-color="#1fa8e0"/><stop offset=".6" stop-color="#2fc4c0"/><stop offset="1" stop-color="#62e04c"/></linearGradient><linearGradient id="e2" x2="1" y2="1"><stop stop-color="#1490e0"/><stop offset="1" stop-color="#0b50a4"/></linearGradient></defs><circle cx="15" cy="15" r="15" fill="url(#e2)"/><path d="M0 14C2-4 27-5 30 13c0 5-4 8-9 7-3 0-3-2-2-4C20 9 6 6 0 14z" fill="url(#e)"/><path d="M19 13c-5-4-10 0-9 6 1 5 7 8 14 6 2-1 4-3 4-5-4 3-12 3-11-3 0-2 1-3 2-4z" fill="#e4f3fb"/><path d="M10 18c0 6 7 11 15 7-7 8-22 5-22-6 0-6 6-9 12-7-3 1-5 3-5 6z" fill="#0e6fc4"/>'),
di:S(30,30,'<circle cx="15" cy="15" r="15" fill="#5865f2"/><path d="M8 9q3-2 5-2l.6 1h2.800l.6-1q2 0 5 2 3 5 3 11-2 2-5 2.500l-1-2q-4 1-8 0l-1 2q-3-.5-5-2.500 0-6 3-11z" fill="#fff"/><ellipse cx="11.500" cy="15.500" rx="2" ry="2.300" fill="#5865f2"/><ellipse cx="18.500" cy="15.500" rx="2" ry="2.300" fill="#5865f2"/>'),
bl:S(30,30,'<path d="m10 1 3-1 1 8-5 5 1 6-6 2-4-6V10l4-1 1-4z" fill="#1f93ff"/><path d="m20 1-4-1v8l5 5-1 6 6 2 4-6V10l-4-1-1-4z" fill="#53b2ff"/><path d="m3 24 6-5 6 3 6-3 6 5-4 2-1 4h-4l-3-1-3 1H8l-1-4z" fill="#2450ff"/>'),
ch:S(30,30,'<circle cx="15" cy="15" r="15" fill="#e23b2e"/><path d="M2 7.500 8.500 19 15 22 13 30A15 15 0 0 1 2 7.500z" fill="#259a4b"/><path d="M15 7.500h13A15 15 0 0 1 13 30l8.500-11z" fill="#fcc414"/><circle cx="15" cy="15" r="7.300" fill="#fff"/><circle cx="15" cy="15" r="5.700" fill="#2c76e8"/>'),
no:S(30,30,'<defs><linearGradient id="n" x2="1" y2="1"><stop stop-color="#a9dce6"/><stop offset="1" stop-color="#2b8ea6"/></linearGradient></defs><path d="m24 5 3 3v17l-4 3z" fill="#8b6f45"/><path d="m24 5 1 6-3 17-16-6z" fill="#f4f7f8" stroke="#9aa"/><path d="M11 3 25 5l-6 20-18-5z" fill="url(#n)"/><path d="m11 3 14 2" stroke="#555" stroke-width="2.500" stroke-dasharray="1.500 1"/>'),
vs:S(30,30,'<path d="m22 0 8 4v22l-8 4z" fill="#23a5ef"/><path d="m22 0 .5 9L4 24l-4-4z" fill="#0673b8"/><path d="m0 10 4-4 18.500 15-.5 9z" fill="#1388ce"/>')};
const penguin=S(100,48,`<defs><linearGradient id="pg" x2="0" y2="1"><stop stop-color="#9a9a98"/><stop offset="1" stop-color="#6b6d6b"/></linearGradient><linearGradient id="rk" x2="1" y2="1"><stop stop-color="#b5b9b7"/><stop offset="1" stop-color="#5d615f"/></linearGradient></defs><path d="M0 48C6 38 18 34 35 38v10z" fill="#9dc5f6"/><path d="M20 48 32 38l22-8c-1-10 4-14 14-15 6-1 6-6 12-8 4-6 8-7 19-7v48z" fill="url(#pg)"/><path d="M78 20c2-8 10-14 21-12v13c-8 3-18 4-21-1zM74 38c6-8 16-8 25-3v13H76c-3-3-4-6-2-10zM40 40c4-8 16-12 26-2 2 4 0 8-4 10H42zM58 22c4-7 14-8 15 0 0 6-3 10-8 12-5-2-8-6-7-12zM78 9c5-5 12-6 20-5L80 14z" fill="url(#rk)"/><path d="M74 22c2 6-2 12-6 16M76 40c-2 3-3 5-2 8M80 24c6 3 13 2 19 0" stroke="#484c4a" stroke-width="1.500"/><path d="m31 5 5-2c3-2 7 0 8 5l4 8 8 15-5-3-4 15-8 3-9-4-6-3 5-3c-1-11 1-18 6-25l-6-5z" fill="#2a2f4e"/><path d="M37 14c9 0 12 10 10 19-1 8-4 11-8 11-6-2-7-13-2-30z" fill="#eeeae3"/><path d="m50 22 6 9-5-3z" fill="#d8d8d8"/><path d="m29 4 7 1-7 2z" fill="#b57065"/><path d="m33 47 6-2M42 43l6-1" stroke="#e69372" stroke-width="3"/>`);
def('win-taskbar',`:host{display:flex;height:50px;background:linear-gradient(90deg,#cfe7ee,#d1e3ed 45%,#d2dcea 80%,#d6dbe9);font:16px/24px "Open Sans",sans-serif;color:#111}
.h{height:50px}.search{height:50px;width:360px;background:#fff;border:1px solid #c3c9cc;display:flex;align-items:center;font-size:18px;color:#222}.app{width:61px;height:50px;display:flex;flex-direction:column;align-items:center;justify-content:center;position:relative}.act{background:#edf4f8}
.u{position:absolute;bottom:0;height:3px;width:51px;background:#0a7bd8}.u2{background:linear-gradient(90deg,#0a7bd8 41px,#67aee6 41px)}.u3{width:61px}
.clk{font-size:13.800px;line-height:23px;display:flex;flex-direction:column;align-items:center}.no{position:relative}.no b{position:absolute;left:8px;top:8px;width:22px;height:22px;border:1px solid #888;border-radius:50%;background:#cfd2d9;font:14px/20px "Open Sans",sans-serif;display:flex;justify-content:center}`,
H(0,[[20,20,S(20,20,'<path d="m0 3 8.500-1.200V9.500H0zM9.500 1.600 20 0v9.500H9.500zM0 10.500h8.500v7.700L0 17zM9.500 10.500H20V20L9.500 18.400z" fill="#000"/>')],
[60,360,`<div class="search">${H(61,[[75,20,S(20,20,'<circle cx="13" cy="7" r="6.200" stroke="#111" stroke-width="1.500"/><path d="m8.500 11.500-8 8" stroke="#111" stroke-width="1.500"/>')],[110.500,53,F(53,'Поиск')],[320,99,penguin]])}</div>`],
[440,20,S(21,20,'<path d="M2 5.500h11v9H2zM1 0v3h13V0M1 20v-3h13v3M19 0v3.500M19 10v10" stroke="#000" stroke-width="1.400"/><path d="M17.500 6h3v3h-3z" fill="#000"/>')],
app(514.500,apps.ex,2),app(576,apps.ed,0),app(638.500,operaO(30,'o2'),2),app(700.500,apps.di,1),app(762.500,apps.bl,1),app(824.500,apps.ch,1),app(886.500,apps.no,2),app(948.500,apps.vs,1),app(1011,palette(30),3),
[1320,30,S(30,30,'<defs><linearGradient id="cl" y2="1" x2="0"><stop stop-color="#c2dcff"/><stop offset="1" stop-color="#7fa5ec"/></linearGradient></defs><circle cx="21" cy="12" r="8" fill="#f9a01f"/><path d="M7 29C-2 28-1 18 6 18c1-9 12-9 14-2 9-2 13 10 4 13z" fill="url(#cl)"/><path d="M5 22c5-6 9-3 11 0" stroke="#dceaff" stroke-width="2"/><circle cx="26" cy="4" r="3.700" fill="#c9341f"/>')],
[1360.500,36,F(36,'16°C')],[1408.500,111,F(111,'Mostly cloudy')],[1550,16,S(16,9,'<path d="m.700 8.300 7.300-7.300 7.300 7.300" stroke="#111" stroke-width="1.400"/>')],
[1581,15,S(15,21,`<rect x="1" y="5" width="9" height="11" rx="2" ${K}/><path d="M10 9l3.500-1.500v6L10 12zM1.500 1.800q4.500-2 9 0M1.500 19q4.500 2 9 0" ${K}/>`)],
[1611,14,S(14,20,'<rect x="2" y="0" width="10" height="15" rx="3" fill="#000"/><path d="M.700 11c0 7 12.600 7 12.600 0M7 16v3M3.500 19.300h7" stroke="#111" stroke-width="1.200"/>')],
[1638,20,S(20,20,`<path d="M1 3 18.500 1v15.500L10 17l-9 1z" ${K}/><path d="M6.500 9q3-5 7 0M13.500 5.500V9H10M13.500 11q-3 4-7 0M6.500 14.500V11H10" ${K}/><circle cx="15.500" cy="15" r="4.500" fill="#ff9a0c"/>`)],
[1668,20,S(20,17,`<path d="M5 2.500h14.300v10H3V6M11 13v3M7 16.300h8M.700.700h4.600v4.600H.700z" ${K}/>`)],
[1698,20,S(20,16,`<path d="M.7 5.500h3l4-4v13l-4-4h-3zM10 5.500q2 2.500 0 5M13 3.500q3.500 4.500 0 9M16 1.500q5 6.500 0 13" ${K}/>`)],
[1732,28,F(28,'ENG','font-size:14.500px')],[1776,69.500,`<div class="clk">${F(34,'16:52')}${F(69.500,'25.04.2023')}</div>`],
[1869,20,`<div class="no">${S(20,20,'<path d="M0 0h20v16h-5l-4 4v-4H0z" fill="#000"/><path d="M4 5h12M4 8.500h12M4 12h7" stroke="#fff" stroke-width="1.300"/>')}<b>${F(15,'10')}</b></div>`],[1914,1,'<i style="width:1px;height:50px;background:#a9b1bd"></i>']]));

def('paint-app',`:host{display:flex;flex-direction:column;width:1920px;height:1080px;overflow:hidden}`,`<paint-titlebar></paint-titlebar><paint-tabs></paint-tabs><paint-ribbon></paint-ribbon><paint-workspace></paint-workspace><win-taskbar></win-taskbar>`);

// Scales its text horizontally to the width in its w attribute.
customElements.define('fit-text',class extends HTMLElement{
 constructor(){super();this.attachShadow({mode:'open'}).innerHTML='<style>:host{display:inline-block;white-space:pre;flex:none}span{display:inline-block;transform-origin:0 0}</style><span><slot></slot></span>'}
 connectedCallback(){const w=+this.getAttribute('w'),s=this.shadowRoot.querySelector('span'),n=s.getBoundingClientRect().width;if(n){s.style.transform=`scaleX(${w/n})`;this.style.width=w+'px'}}
});
</script></body></html>
